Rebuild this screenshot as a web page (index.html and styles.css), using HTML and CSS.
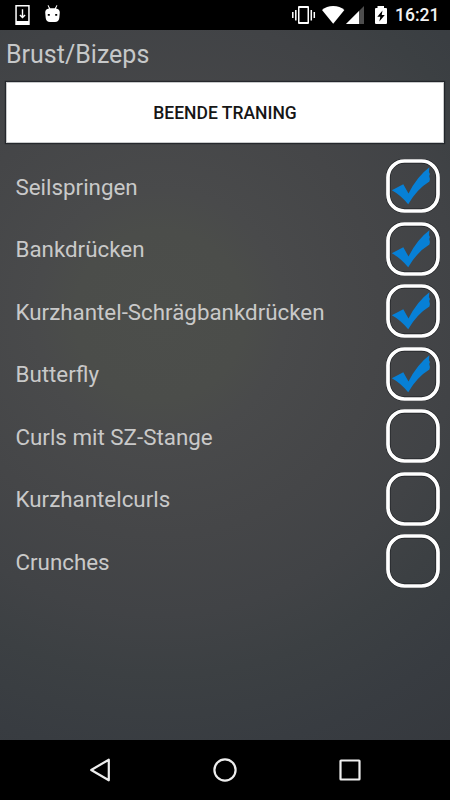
FILE: index.html
```html
<!DOCTYPE html>
<html lang="de">
<head>
<meta charset="utf-8">
<title>Brust/Bizeps</title>
<link rel="stylesheet" href="styles.css">
</head>
<body>
<svg class="defs" aria-hidden="true">
  <symbol id="box" viewBox="0 0 54 54">
    <rect class="edge" x="2" y="2" width="50" height="50" rx="16.5"/>
    <rect class="frame" x="2" y="2" width="50" height="50" rx="16.5"/>
  </symbol>
  <symbol id="check" viewBox="0 0 54 54">
    <path d="M5.8 31.3 L17.3 25.2 L22.5 34.5 Q31 17.5 43.4 8.2 L42.9 13 L43.9 15 L43.2 17 L43.9 20 L43.4 22.5 Q31 30 22.2 45.3 Q14.5 36 5.8 31.3Z"/>
  </symbol>
</svg>
<div class="screen">
  <header class="status">
    <svg class="notices" width="70" height="30" viewBox="0 0 70 30">
      <path class="white" fill-rule="evenodd" d="M15.3 5H29.7V25H15.3Z M16.8 6.5V21H28.2V6.5Z"/>
      <path class="line" d="M22.5 9.3V17 M19.9 15L22.5 17.6L25.1 15"/>
      <path class="white" fill-rule="evenodd" d="M45.2 12.5Q45.2 9 49 8.5L47.6 5.5L48.3 5L50.2 8.2H54.8L56.7 5L57.4 5.5L56 8.5Q59.8 9 59.8 12.5L59.3 18Q58.8 22 55 22H50Q46.2 22 45.7 18Z M47.8 14V15.8H49.8V14Z M55.2 14V15.8H57.2V14Z"/>
    </svg>
    <div class="system">
      <svg width="98" height="30" viewBox="291 0 98 30">
        <path class="white" fill-rule="evenodd" d="M299 6H308Q309 6 309 7V23Q309 24 308 24H299Q298 24 298 23V7Q298 6 299 6Z M299.5 8V22H307.5V8Z"/>
        <path class="bars" d="M292.8 12V18 M295.8 10V20.5 M311.3 10V20.5 M314.3 12V18"/>
        <path class="white" d="M322 10Q326.5 6 333.2 6T344.4 10L333.2 23.8Z"/>
        <path class="dim" d="M364 6V24H346Z"/>
        <path class="white" d="M359 11V24H346Z"/>
        <path class="white" fill-rule="evenodd" d="M377.5 6H384V8H386Q387 8 387 9V23Q387 24 386 24H376Q375 24 375 23V9Q375 8 376 8H377.5Z M382.5 10.5L377.3 16.8H380.3L379.3 21.5L384.8 15H381.7Z"/>
      </svg>
      <time class="clock">16:21</time>
    </div>
  </header>
  <main class="content">
    <h1 class="title">Brust/Bizeps</h1>
    <button class="finish">BEENDE TRANING</button>
    <ul class="exercises">
      <li class="exercise"><span class="name">Seilspringen</span><svg class="box"><use href="#box"/><use href="#check"/></svg></li>
      <li class="exercise"><span class="name">Bankdrücken</span><svg class="box"><use href="#box"/><use href="#check"/></svg></li>
      <li class="exercise"><span class="name">Kurzhantel-Schrägbankdrücken</span><svg class="box"><use href="#box"/><use href="#check"/></svg></li>
      <li class="exercise"><span class="name">Butterfly</span><svg class="box"><use href="#box"/><use href="#check"/></svg></li>
      <li class="exercise"><span class="name">Curls mit SZ-Stange</span><svg class="box"><use href="#box"/></svg></li>
      <li class="exercise"><span class="name">Kurzhantelcurls</span><svg class="box"><use href="#box"/></svg></li>
      <li class="exercise"><span class="name">Crunches</span><svg class="box"><use href="#box"/></svg></li>
    </ul>
  </main>
  <nav class="navbar">
    <svg viewBox="0 0 30 30"><path d="M6.2 15L23.8 4.7V25.3Z"/></svg>
    <svg viewBox="0 0 30 30"><circle cx="15" cy="15" r="10.6"/></svg>
    <svg viewBox="0 0 30 30"><rect x="5.5" y="5.5" width="19" height="19" rx=".5"/></svg>
  </nav>
</div>
</body>
</html>
```
FILE: styles.css
```css
* { box-sizing: border-box; }
body { margin: 0; font-family: Roboto, "Liberation Sans", sans-serif; background: #000; }
.defs { display: none; }
.screen { width: 450px; height: 800px; display: flex; flex-direction: column; overflow: hidden; }
.status { height: 30px; flex: none; display: flex; justify-content: space-between; background: #000; }
.status svg { display: block; }
.white { fill: #fff; }
.dim { fill: #4d4d4d; }
.line { fill: none; stroke: #fff; stroke-width: 1.4; }
.bars { fill: none; stroke: #fff; stroke-width: 1.5; }
.system { display: flex; width: 159px; }
.clock { margin-left: 6px; color: #f2f2f2; font-size: 17.5px; font-weight: 500; line-height: 31px; }
.content {
  flex: 1;
  padding: 7px 6px 0;
  background: radial-gradient(circle at 160px 285px, #4c4e4b 0, #4b4d4a 85px, #494a4b 125px, #454648 220px, #414346 300px, #3c4043 360px, #383c41 440px, #35383d 540px);
}
.title { margin: 0; font-size: 25px; font-weight: 400; line-height: 36px; color: #c6c8c9; }
.finish {
  display: block; width: 438px; height: 61px; margin-top: 9px; padding: 1px 0 0;
  border: 1px solid #c8cacb; border-radius: 0; background: #fff; color: #161616;
  font: 500 17.5px Roboto, "Liberation Sans", sans-serif;
  box-shadow: 0 0 1px 1px rgba(16, 20, 26, .6);
}
.exercises { margin: 12px 0 0; padding: 0; list-style: none; }
.exercise {
  height: 62.5px; display: flex; align-items: center; justify-content: space-between;
  padding: 0 4px 0 9.5px; font-size: 22.35px; color: #c9c9c9;
}
.name { padding-top: 1px; }
.box { width: 54px; height: 54px; fill: #0780d6; }
.frame { fill: none; stroke: #fff; stroke-width: 3.7; }
.edge { fill: none; stroke: #1d1f22; stroke-width: 5; }
.navbar { height: 60px; flex: none; background: #000; display: flex; justify-content: center; align-items: center; gap: 95px; }
.navbar svg { width: 30px; height: 30px; fill: none; stroke: #eee; stroke-width: 2.2; stroke-linejoin: round; }
```
